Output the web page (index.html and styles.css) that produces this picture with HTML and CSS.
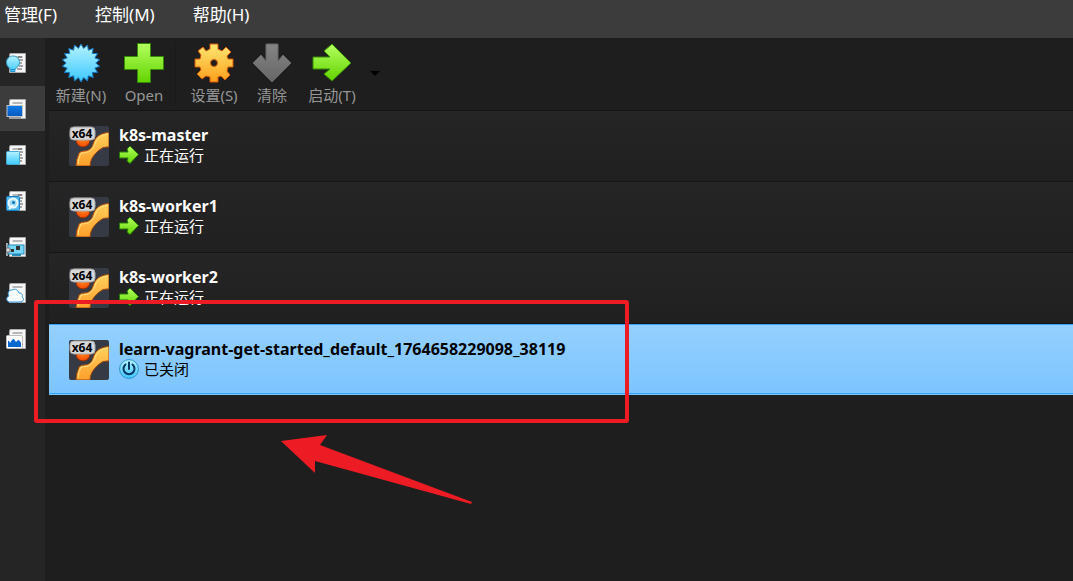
FILE: index.html
```
<!DOCTYPE html>
<html lang="zh-CN">
<head>
<meta charset="utf-8">
<title>VirtualBox</title>
<link rel="stylesheet" href="styles.css">
</head>
<body>
<svg class="defs" aria-hidden="true">
  <defs>
    <linearGradient id="blue" x1="0" y1="0" x2="0" y2="1"><stop offset="0" stop-color="#b5f2ff"/><stop offset="1" stop-color="#3cc8ff"/></linearGradient>
    <linearGradient id="green" x1="0" y1="0" x2="0" y2="1"><stop offset="0" stop-color="#b4ff60"/><stop offset="1" stop-color="#62d400"/></linearGradient>
    <linearGradient id="orange" x1="0" y1="0" x2="0" y2="1"><stop offset="0" stop-color="#ffe873"/><stop offset="1" stop-color="#ff9f1a"/></linearGradient>
    <linearGradient id="joint" x1="0" y1="0" x2="0" y2="1"><stop offset="0" stop-color="#ffd05c"/><stop offset="1" stop-color="#ff9f2c"/></linearGradient>
    <linearGradient id="gray" x1="0" y1="0" x2="0" y2="1"><stop offset="0" stop-color="#858585"/><stop offset="1" stop-color="#666"/></linearGradient>
    <linearGradient id="screen" x1="0" y1="0" x2="0" y2="1"><stop offset="0" stop-color="#0f7be8"/><stop offset="1" stop-color="#0758bd"/></linearGradient>
    <radialGradient id="ball" cx=".5" cy=".3" r=".7"><stop offset="0" stop-color="#ff9a2e"/><stop offset="1" stop-color="#f54800"/></radialGradient>
    <symbol id="page" viewBox="0 0 20 20"><path d="M4 .5h15.500v19H3.500V3z" fill="#f7f7f7" stroke="#aaa"/><path d="M6.500 4h10" stroke="#777" stroke-width="1"/></symbol>
    <symbol id="lines" viewBox="0 0 20 20"><path d="M12 4h4M13 7h4M12 10h4M13 13h4M11 16h5" stroke="#555"/></symbol>
    <symbol id="vm" viewBox="0 0 40 40">
      <rect width="40" height="40" rx="2" fill="#363a45"/>
      <circle cx="14" cy="14" r="7" fill="url(#ball)" stroke="#8d2c05"/>
      <path d="M7 40Q7 34 10 27Q12 25 15 25C20 25 23 22 24 18C26 11 31 7 40 6.500V21Q34 20 29 25Q21 32 21 40Z" fill="url(#joint)" stroke="#a44810"/>
      <path d="M9 38Q9 33 12 27C20 27 24 24 26 18C28 12 32 9 39 8" fill="none" stroke="#ffdf86"/>
      <rect x="1" y="1" width="25" height="13" rx="4" fill="#d7d7d7" stroke="#aaa"/>
      <text x="13" y="12" text-anchor="middle" class="badge">x64</text>
    </symbol>
    <symbol id="run" viewBox="0 0 20 20"><path d="M.5 7H9L8 4L11 1L19.500 9.500L11 18.500L8 16L9 13H.5Z" fill="url(#green)" stroke="#267c0a"/></symbol>
    <symbol id="power" viewBox="0 0 20 20"><circle cx="10" cy="10" r="9.400" fill="url(#blue)" stroke="#2c91c8"/><path d="M10 3.500V10M6.500 5.500a5.500 5.500 0 1 0 7 0" fill="none" stroke="#063765" stroke-width="2" stroke-linecap="round"/></symbol>
  </defs>
</svg>
<div class="app">
  <header class="menubar">
    <button class="menu">管理(F)</button>
    <button class="menu">控制(M)</button>
    <button class="menu">帮助(H)</button>
  </header>
  <div class="workspace">
    <nav class="tools">
      <button class="tool" aria-label="欢迎"><svg class="tool-icon" viewBox="0 0 20 20"><use href="#page"/><use href="#lines"/><path d="M7 3C3 3 .5 6 .5 9.500C.5 13 3 14.500 4.500 16V18.500H9V16C11 14.500 13.500 13 13.500 9.500C13.500 6 11 3 7 3" fill="url(#blue)" stroke="#3599c9"/><path d="M5 16.500h4M5 18.500h4" stroke="#1c8fd0"/></svg></button>
      <button class="tool tool-active" aria-label="虚拟机"><svg class="tool-icon" viewBox="0 0 20 20"><use href="#page"/><path d="M4 18.500h11" stroke="#999" stroke-width="2"/><rect x="1" y="6.500" width="15.500" height="11" fill="url(#screen)" stroke="#bfc4ca"/></svg></button>
      <button class="tool" aria-label="扩展"><svg class="tool-icon" viewBox="0 0 20 20"><use href="#page"/><use href="#lines"/><rect x=".5" y="6.500" width="13" height="13" rx="1" fill="url(#blue)" stroke="#48a9d5"/></svg></button>
      <button class="tool" aria-label="介质"><svg class="tool-icon" viewBox="0 0 20 20"><use href="#page"/><use href="#lines"/><rect x=".5" y="5.500" width="13" height="14" rx="1" fill="#52b8ee" stroke="#167fc9"/><circle cx="7" cy="12" r="4.500" fill="#9bdcf8" stroke="#effcff" stroke-width="2"/><circle cx="7.500" cy="11.500" r="1.500" fill="#1673c0"/><path d="M3 18L7 14" stroke="#effcff" stroke-width="2"/></svg></button>
      <button class="tool" aria-label="网络"><svg class="tool-icon" viewBox="0 0 20 20"><use href="#page"/><path d="M1 6v13" stroke="#aaa" stroke-width="2"/><rect x="2" y="8" width="16" height="9" fill="#79d7f7" stroke="#278bb8"/><path d="M6 18h9" stroke="#278bb8" stroke-width="2"/><path d="M10 9h4v4h-4zM5 12h3v3H5z" fill="#333"/><path d="M0 11h4v4H0z" fill="#ddd" stroke="#777"/></svg></button>
      <button class="tool" aria-label="云"><svg class="tool-icon" viewBox="0 0 20 20"><use href="#page"/><path d="M3 19C0 18 0 14 3 13C1 10 3 7 6 7C9 5 12 7 13 10C16 10 17 12 16 14C19 16 17 19 14 19Z" fill="#f7fcff" stroke="#3397df"/></svg></button>
      <button class="tool" aria-label="活动"><svg class="tool-icon" viewBox="0 0 20 20"><use href="#page"/><rect x=".5" y="6.500" width="16" height="13" rx="1" fill="#fff" stroke="#bbb"/><path d="M2 18V12Q3 11 4 14Q6 10 8 10L10 13L12 11Q14 11 15 14V18Z" fill="#0868cd"/></svg></button>
    </nav>
    <main class="manager">
      <div class="toolbar">
        <button class="action"><svg class="action-icon" viewBox="-20 -20 40 40"><path d="M0-19L2.600-14.600 6.500-17.900 7.400-12.800 12.200-14.600 11.300-9.500 16.500-9.500 13.900-5.100 18.700-3.300 14.800 0 18.700 3.300 13.900 5.100 16.500 9.500 11.300 9.500 12.200 14.600 7.400 12.800 6.500 17.900 2.600 14.600 0 19-2.600 14.600-6.500 17.900-7.400 12.800-12.200 14.600-11.300 9.500-16.500 9.500-13.900 5.100-18.700 3.300-14.800 0-18.700-3.300-13.900-5.100-16.500-9.500-11.300-9.500-12.200-14.600-7.400-12.800-6.500-17.900-2.600-14.600Z" fill="url(#blue)" stroke="#1478c8"/></svg><span>新建(N)</span></button>
        <button class="action action-open"><svg class="action-icon" viewBox="0 0 40 40"><path d="M13.500.5H26.500V13.500H39.500V26.500H26.500V39.500H13.500V26.500H.5V13.500H13.500Z" fill="url(#green)" stroke="#358b06"/></svg><span>Open</span></button>
        <span class="separator"></span>
        <button class="action"><svg class="action-icon" viewBox="0 0 40 40"><path fill-rule="evenodd" d="M16 1H24V6L28 8L32 4L37 9L33 13L34 16H39V24H34L33 28L36 32L31 37L27 33L24 34V39H16V34L12 33L8 36L3 31L7 27L6 24H1V16H6L7 12L4 8L9 4L12 8L16 6ZM20 16.500A3.500 3.500 0 1 0 20 23.500A3.500 3.500 0 1 0 20 16.500Z" fill="url(#orange)" stroke="#d85a0b"/></svg><span>设置(S)</span></button>
        <button class="action action-compact" disabled><svg class="action-icon" viewBox="0 0 40 40"><path d="M14 1H26V18L31 12L39 20L20 39L1 20L9 12L14 18Z" fill="url(#gray)" stroke="#666"/></svg><span>清除</span></button>
        <button class="action action-start"><svg class="action-icon" viewBox="0 0 40 40"><path d="M1 14H18L12 8L20 1L39 20L20 38L12 31L18 26H1Z" fill="url(#green)" stroke="#358b06"/></svg><span>启动(T)</span></button>
        <button class="more" aria-label="启动选项"></button>
      </div>
      <ul class="machines">
        <li class="machine"><svg class="machine-icon"><use href="#vm"/></svg><div class="details"><strong class="name">k8s-master</strong><span class="status"><svg class="status-icon"><use href="#run"/></svg>正在运行</span></div></li>
        <li class="machine"><svg class="machine-icon"><use href="#vm"/></svg><div class="details"><strong class="name">k8s-worker1</strong><span class="status"><svg class="status-icon"><use href="#run"/></svg>正在运行</span></div></li>
        <li class="machine"><svg class="machine-icon"><use href="#vm"/></svg><div class="details"><strong class="name">k8s-worker2</strong><span class="status"><svg class="status-icon"><use href="#run"/></svg>正在运行</span></div></li>
        <li class="machine machine-selected"><svg class="machine-icon"><use href="#vm"/></svg><div class="details"><strong class="name">learn-vagrant-get-started_default_1764658229098_38119</strong><span class="status"><svg class="status-icon"><use href="#power"/></svg>已关闭</span></div></li>
      </ul>
    </main>
  </div>
  <svg class="annotation" viewBox="0 0 595 206" aria-hidden="true"><rect x="2" y="2" width="591" height="119" rx="1" fill="none" stroke="#ed1c24" stroke-width="4"/><path d="M247 141L293 135L286 145L438 202L437 204L281 161L281 173Z" fill="#ed1c24"/></svg>
</div>
</body>
</html>
```
FILE: styles.css
```
* { box-sizing: border-box; }
body {
  margin: 0;
  background: #1e1e1e;
  color: #fff;
  font: 15px/20px "Noto Sans", "Noto Sans CJK SC", sans-serif;
}
button {
  border: 0;
  padding: 0;
  background: none;
  color: inherit;
  font: inherit;
}
.defs { position: absolute; width: 0; height: 0; }
.app { position: relative; display: flex; flex-direction: column; min-height: 100vh; overflow: hidden; }
.menubar { display: flex; gap: 38px; height: 38px; padding: 0 4px 8px; background: #3c3c3c; font-size: 17px; }
.workspace { display: flex; flex: 1; }
.tools { display: flex; flex-direction: column; gap: 1px; width: 45px; padding-top: 2px; background: #252525; }
.tool { display: flex; align-items: center; height: 45px; padding-left: 6px; }
.tool-active { background: #3c3c3c; }
.tool-icon { width: 20px; height: 20px; }
.manager { flex: 1; min-width: 0; padding-left: 4px; }
.toolbar { display: flex; height: 73px; padding-top: 5px; border-bottom: 1px solid #151515; color: #969696; }
.action { display: flex; flex-direction: column; align-items: center; gap: 2px; width: 64px; white-space: nowrap; }
.action-open { width: 62px; }
.action-compact { width: 52px; color: #969696; }
.action-start { width: 68px; }
.action-icon { width: 40px; height: 40px; }
.separator { width: 1px; height: 63px; margin-right: 6px; background: #191919; }
.more { align-self: flex-start; margin: 28px 0 0 4px; border: 5px solid transparent; border-top-color: #000; border-bottom: 0; }
.machines { margin: 0; padding: 0; list-style: none; }
.machine { display: flex; gap: 10px; height: 71px; padding: 15px 20px; border-bottom: 1px solid #151515; background: linear-gradient(#252525, #202020); }
.machine-selected { border-top: 1px solid #36a3ff; border-bottom: 1px solid #7cc4ff; background: linear-gradient(#94d0ff, #7cc4ff); box-shadow: inset 0 -1px #36a3ff; color: #000; }
.machine-icon { flex: none; width: 40px; height: 40px; }
.details { display: flex; flex-direction: column; margin-top: -1px; }
.name { font-size: 16px; font-weight: 700; white-space: nowrap; }
.status { display: flex; align-items: center; gap: 5px; }
.status-icon { width: 20px; height: 20px; }
.badge { font: bold 12px "Noto Sans", sans-serif; fill: #000; }
.annotation { position: absolute; left: 34px; top: 300px; width: 595px; height: 206px; pointer-events: none; }
```
